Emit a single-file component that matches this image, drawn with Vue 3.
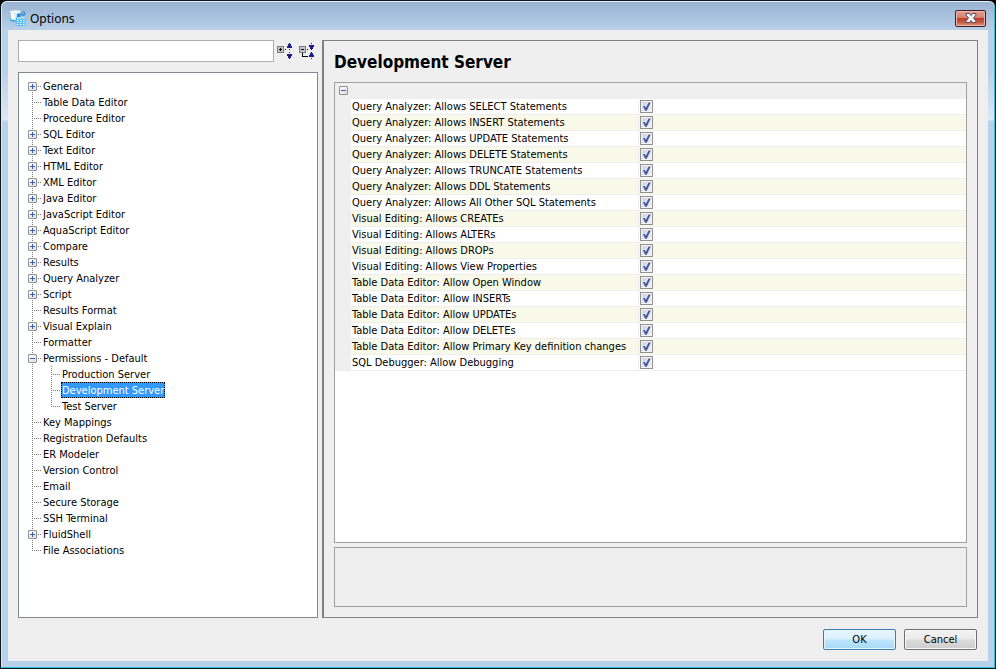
<script setup>
import { ref } from 'vue'

const query = ref('')
const selected = ref('Development Server')

const leaf = (label) => ({ label })
const branch = (label, children = [], open = false) => ({ label, children, open })

const tree = ref([
  branch('General'),
  leaf('Table Data Editor'),
  leaf('Procedure Editor'),
  branch('SQL Editor'),
  branch('Text Editor'),
  branch('HTML Editor'),
  branch('XML Editor'),
  branch('Java Editor'),
  branch('JavaScript Editor'),
  branch('AquaScript Editor'),
  branch('Compare'),
  branch('Results'),
  branch('Query Analyzer'),
  branch('Script'),
  leaf('Results Format'),
  branch('Visual Explain'),
  leaf('Formatter'),
  branch('Permissions - Default', ['Production Server', 'Development Server', 'Test Server'], true),
  leaf('Key Mappings'),
  leaf('Registration Defaults'),
  leaf('ER Modeler'),
  leaf('Version Control'),
  leaf('Email'),
  leaf('Secure Storage'),
  leaf('SSH Terminal'),
  branch('FluidShell'),
  leaf('File Associations'),
])

const groupOpen = ref(true)
const permissions = ref([
  'Query Analyzer: Allows SELECT Statements',
  'Query Analyzer: Allows INSERT Statements',
  'Query Analyzer: Allows UPDATE Statements',
  'Query Analyzer: Allows DELETE Statements',
  'Query Analyzer: Allows TRUNCATE Statements',
  'Query Analyzer: Allows DDL Statements',
  'Query Analyzer: Allows All Other SQL Statements',
  'Visual Editing: Allows CREATEs',
  'Visual Editing: Allows ALTERs',
  'Visual Editing: Allows DROPs',
  'Visual Editing: Allows View Properties',
  'Table Data Editor: Allow Open Window',
  'Table Data Editor: Allow INSERTs',
  'Table Data Editor: Allow UPDATEs',
  'Table Data Editor: Allow DELETEs',
  'Table Data Editor: Allow Primary Key definition changes',
  'SQL Debugger: Allow Debugging',
].map((label) => ({ label, allowed: true })))

const setAll = (open) => tree.value.forEach((node) => { if (node.children) node.open = open })
</script>

<template>
  <div class="window">
    <header class="titlebar">
      <svg class="app-icon" width="16" height="16" viewBox="0 0 16 16" aria-hidden="true">
        <path d="M0 2v8c0 1.200 2.500 2 5.500 2s5.500-.8 5.500-2V2z" fill="#a9c6dc" />
        <path d="M0 8v2c0 1.200 2.500 2 5.500 2V9.500C3 9.500 1 9 0 8z" fill="#3aa6e6" />
        <path d="M1 3v6c1 .6 2.500 .9 4 .9V4z" fill="#fbfdfe" />
        <path d="M5 4h2v6H5z" fill="#cfe9f8" />
        <path d="M7 3.800L10.500 3v6L7 10z" fill="#1e8fe0" />
        <ellipse cx="5.500" cy="2" rx="5.500" ry="1.700" fill="#f0f7fb" />
        <circle cx="13" cy="3.500" r="2.500" fill="#4398dc" />
        <circle cx="12.500" cy="2.800" r="1" fill="#8cc6f0" />
        <path d="M6 7h9.500v9H5.500z" fill="#5fc0ee" />
        <path d="M7 8h8M7 10.500h1.500M10 10.500h1.500M13 10.500h1.500M7 12.500h1.500M10 12.500h1.500M13 12.500h1.500M6.500 14.500h2M10 14.500h1.500M13 14.500h1.500" stroke="#e6f6fd" stroke-width="1" fill="none" />
      </svg>
      <h1 class="title">Options</h1>
      <button class="close" type="button" aria-label="Close">
        <svg width="12" height="10" viewBox="0 0 12 10" aria-hidden="true">
          <path d="M1 .5h3.500L6 2.500 7.500 .5H11v1.500L8.500 5 11 8v1.500H7.500L6 7.500 4.500 9.500H1V8l2.500-3L1 2z" fill="#f4f4f4" stroke="#4c5262" />
        </svg>
      </button>
    </header>

    <div class="client">
      <main class="panes">
        <aside class="sidebar">
          <div class="search">
            <input v-model="query" class="search-box" type="text" aria-label="Search options" />
            <div class="tools">
              <button class="tool" type="button" aria-label="Expand all" @click="setAll(true)">
                <svg width="16" height="16" viewBox="0 0 16 16" shape-rendering="crispEdges" aria-hidden="true">
                  <path d="M.5 3.500h6v6h-6z" fill="#c4c4c4" stroke="#7b7b7b" />
                  <path d="M2 6h3v1H2zM3 5h1v3H3zM8 6h1v1H8z" fill="#000" />
                  <path d="M12 0h1v1h1v2h1v2h-5V3h1V1h1zM12 6h1v1h-1zM12 9h1v1h-1zM10 11h5v2h-1v2h-1v1h-1v-1h-1v-2h-1z" fill="#1b1b8f" />
                </svg>
              </button>
              <button class="tool" type="button" aria-label="Collapse all" @click="setAll(false)">
                <svg width="16" height="16" viewBox="0 0 16 16" shape-rendering="crispEdges" aria-hidden="true">
                  <path d="M.5 3.500h6v6h-6z" fill="#c4c4c4" stroke="#7b7b7b" />
                  <path d="M2 6h3v1H2zM8 6h1v1H8zM3 10h1v3h5v1H3z" fill="#000" />
                  <path d="M12 0h1v1h-1zM10 2h5v2h-1v2h-1v1h-1V6h-1V4h-1zM12 9h1v1h1v2h1v2h-5v-2h1v-2h1zM12 15h1v1h-1z" fill="#1b1b8f" />
                </svg>
              </button>
            </div>
          </div>

          <ul class="tree">
            <li v-for="node in tree" :key="node.label" class="node">
              <div class="line">
                <button
                  v-if="node.children"
                  class="toggle"
                  :class="{ open: node.open }"
                  type="button"
                  :aria-label="'Toggle ' + node.label"
                  @click="node.open = !node.open"
                ></button>
                <span class="label" @click="selected = node.label">{{ node.label }}</span>
              </div>
              <ul v-if="node.open && node.children.length" class="subtree">
                <li v-for="child in node.children" :key="child" class="node">
                  <div class="line">
                    <span class="label" :class="{ selected: selected === child }" @click="selected = child">{{ child }}</span>
                  </div>
                </li>
              </ul>
            </li>
          </ul>
        </aside>

        <section class="detail">
          <h2 class="heading">Development Server</h2>
          <div class="grid-box">
            <div class="group">
              <button
                class="toggle"
                :class="{ open: groupOpen }"
                type="button"
                aria-label="Toggle group"
                @click="groupOpen = !groupOpen"
              ></button>
            </div>
            <table v-if="groupOpen" class="grid">
              <tbody>
                <tr v-for="(item, i) in permissions" :key="item.label">
                  <td class="gutter"></td>
                  <th class="name" scope="row"><label :for="'perm-' + i">{{ item.label }}</label></th>
                  <td class="value"><input :id="'perm-' + i" v-model="item.allowed" class="check" type="checkbox" /></td>
                </tr>
              </tbody>
            </table>
          </div>
          <div class="description"></div>
        </section>
      </main>

      <footer class="actions">
        <button class="btn primary" type="button">OK</button>
        <button class="btn" type="button">Cancel</button>
      </footer>
    </div>
  </div>
</template>

<style>
body {
  background: #000;
}
</style>

<style scoped>
.window {
  box-sizing: border-box;
  display: flex;
  flex-direction: column;
  min-height: 100vh;
  padding: 0 7px 7px;
  border: 1px solid #10141c;
  border-radius: 7px 7px 0 0;
  background: linear-gradient(#98b2d1, #b9d1ea 30px, #b9d1ea 70px, #dbe8f6 119px, #b9d1ea 120px);
  box-shadow: inset 0 1px #e8f0f8, inset -1px -1px #2fc0dc, inset 1px 0 #dce9f6;
  color: #000;
  font-family: "DejaVu Sans Condensed", "DejaVu Sans", sans-serif;
  font-size: 11px;
  line-height: 16px;
}

.titlebar {
  display: flex;
  align-items: center;
  height: 29px;
  padding: 0 2px;
}

.app-icon {
  margin-top: 5px;
}

.title {
  flex: 1;
  margin: 6px 0 0 4px;
  font: 12px/16px "Noto Sans", sans-serif;
}

.close {
  display: flex;
  align-items: center;
  justify-content: center;
  box-sizing: border-box;
  width: 31px;
  height: 17px;
  margin-top: 5px;
  padding: 0;
  border: 1px solid #431b27;
  border-radius: 2px;
  background: linear-gradient(#e6a090, #d4806f 45%, #bc4027 50%, #c65c42 75%, #dd9a80);
  box-shadow: inset 0 0 0 1px #eab5a8;
}

.client {
  display: flex;
  flex: 1;
  flex-direction: column;
  padding: 10px 10px 11px;
  background: #efefef;
}

.panes {
  display: flex;
  flex: 1;
}

.sidebar {
  display: flex;
  flex: 0 0 300px;
  flex-direction: column;
  margin-right: 4px;
}

.search {
  display: flex;
  align-items: center;
  gap: 3px;
  margin-bottom: 10px;
}

.search-box {
  box-sizing: border-box;
  flex: 1;
  min-width: 0;
  height: 22px;
  padding: 0 4px;
  border: 1px solid #abadb3;
  background: #fff;
  font: inherit;
}

.tools {
  display: flex;
  gap: 6px;
  padding-right: 3px;
}

.tool {
  display: flex;
  padding: 0;
  border: 0;
  background: none;
}

.tree {
  flex: 1;
  margin: 0;
  padding: 5px 10px;
  border: 1px solid #828790;
  background: #fff;
  list-style: none;
}

.subtree {
  margin: 0;
  padding: 0 0 0 19px;
  list-style: none;
}

.node {
  position: relative;
}

.node::before {
  position: absolute;
  top: 0;
  bottom: 0;
  left: 3px;
  width: 1px;
  background: repeating-linear-gradient(#808080 0 1px, transparent 1px 2px);
  content: "";
}

.node:last-child::before {
  bottom: auto;
  height: 8px;
}

.tree > .node:first-child::before {
  top: 8px;
}

.line {
  display: flex;
  position: relative;
  align-items: center;
  height: 16px;
  padding-left: 13px;
}

.line::before {
  position: absolute;
  top: 8px;
  left: 3px;
  width: 10px;
  height: 1px;
  background: repeating-linear-gradient(90deg, #808080 0 1px, transparent 1px 2px);
  content: "";
}

.line .toggle {
  position: absolute;
  top: 4px;
  left: -1px;
}

.toggle {
  box-sizing: border-box;
  width: 9px;
  height: 9px;
  padding: 0;
  border: 1px solid #919191;
  border-radius: 1px;
  background:
    linear-gradient(#3b5fb5, #3b5fb5) center / 5px 1px no-repeat,
    linear-gradient(#3b5fb5, #3b5fb5) center / 1px 5px no-repeat,
    linear-gradient(135deg, #fff, #dedede);
}

.toggle.open {
  background:
    linear-gradient(#3b5fb5, #3b5fb5) center / 5px 1px no-repeat,
    linear-gradient(135deg, #fff, #dedede);
}

.label {
  box-sizing: border-box;
  height: 16px;
  padding: 0 1px;
  line-height: 18px;
  white-space: nowrap;
}

.label.selected {
  outline: 1px dotted #000;
  outline-offset: -1px;
  background: #3399ff;
  color: #fff;
}

.detail {
  display: flex;
  flex: 1;
  flex-direction: column;
  min-width: 0;
  padding: 10px;
  border: 1px solid #808080;
  border-left-width: 2px;
}

.heading {
  margin: 0 0 9px;
  font-size: 17px;
  line-height: 22px;
}

.grid-box {
  flex: 1;
  margin-bottom: 4px;
  border: 1px solid #a0a0a0;
  background: #fff;
}

.group {
  display: flex;
  align-items: flex-start;
  box-sizing: border-box;
  height: 16px;
  padding: 3px 0 0 4px;
  background: #efefef;
}

.grid {
  width: 100%;
  border-collapse: separate;
  border-spacing: 0;
  table-layout: fixed;
}

.grid tr:nth-child(even) {
  background: #f8f9e8;
}

.grid td,
.grid th {
  height: 15px;
  padding: 0;
  border-bottom: 1px solid #efefef;
  line-height: 15px;
}

.grid .gutter {
  width: 16px;
  background: #efefef;
}

.grid .name {
  width: 286px;
  padding-left: 1px;
  border-right: 1px solid #efefef;
  font-weight: normal;
  text-align: left;
  white-space: nowrap;
}

.name label {
  display: block;
}

.grid .value {
  padding-left: 1px;
}

.check {
  display: block;
  box-sizing: border-box;
  width: 13px;
  height: 13px;
  margin: 0;
  border: 1px solid #8e8f8f;
  appearance: none;
  background: linear-gradient(135deg, #cdd2da, #f4f4f4);
  box-shadow: inset 0 0 0 1px #f4f4f4;
}

.check:checked::before {
  display: block;
  width: 11px;
  height: 11px;
  background: #40599e;
  clip-path: polygon(18% 46%, 34% 46%, 44% 62%, 70% 14%, 88% 14%, 52% 88%, 38% 88%);
  content: "";
}

.description {
  height: 58px;
  border: 1px solid #a0a0a0;
}

.actions {
  display: flex;
  justify-content: flex-end;
  gap: 8px;
  padding: 11px 1px 0 0;
}

.btn {
  box-sizing: border-box;
  width: 73px;
  height: 21px;
  padding: 0;
  border: 1px solid #707070;
  border-radius: 2px;
  background: linear-gradient(#f3f3f3, #ebebeb 48%, #dcdcdc 52%, #cdcdcd);
  box-shadow: inset 0 0 0 1px #f8f8f8;
  color: #000;
  font: inherit;
  line-height: 16px;
}

.btn.primary {
  border-color: #3c7fb1;
  background: linear-gradient(#eaf6fd, #d9f0fc 48%, #bee6fd 52%, #a7d9f5);
  box-shadow: inset 0 0 0 1px #e4f5fd;
}
</style>
